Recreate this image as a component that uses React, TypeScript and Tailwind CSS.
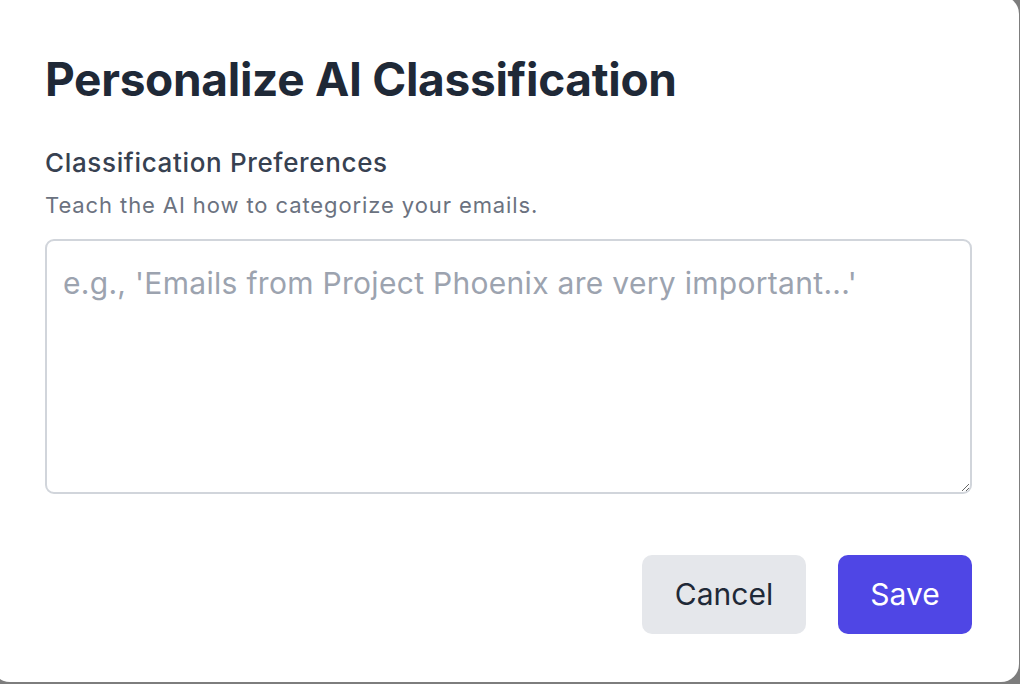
import React from "react";

export default function App() {
  return (
    <div className="w-[1020px] h-[684px] overflow-hidden bg-[#7d7d7d]" style={{ fontFamily: "Inter, 'Noto Sans', sans-serif" }}>
      <div className="w-[1027px] h-[686px] -ml-[8px] -mt-[4px] bg-white rounded-[18px] pl-[53px] pr-[47px] flex flex-col">
        <h1 className="mt-[60px] text-[46px] leading-[46px] font-bold text-[#1f2937] tracking-[-0.3px]">
          Personalize AI Classification
        </h1>
        <label className="mt-[42px] text-[26px] leading-[38px] font-medium text-[#374151] tracking-[0.65px]">
          Classification Preferences
        </label>
        <p className="mt-[8px] text-[22px] leading-[30px] text-[#6b7280] tracking-[0.9px]">
          Teach the AI how to categorize your emails.
        </p>
        <textarea
          className="mt-[19px] w-[927px] h-[255px] rounded-[9px] border-2 border-[#d1d5db] px-[16px] pt-[24px] pb-[16px] text-[30px] leading-[36px] tracking-[0.3px] text-[#1f2937] placeholder:text-[#9ca3af] outline-none"
          placeholder="e.g., 'Emails from Project Phoenix are very important...'"
        />
        <div className="mt-[61px] flex justify-end gap-[32px] w-[927px]">
          <button className="w-[164px] h-[79px] rounded-[10px] bg-[#e5e7eb] text-[30px] text-[#1f2937]">
            Cancel
          </button>
          <button className="w-[134px] h-[79px] rounded-[10px] bg-[#4f46e5] text-[30px] text-white">
            Save
          </button>
        </div>
      </div>
    </div>
  );
}
